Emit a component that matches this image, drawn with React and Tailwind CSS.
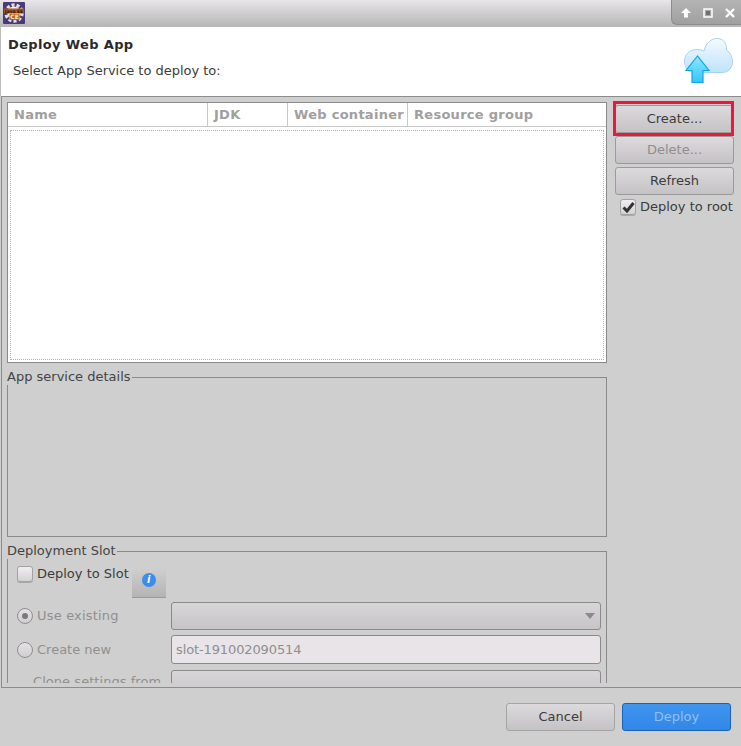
const font = { fontFamily: '"DejaVu Sans", sans-serif' };

// small tool button with the GTK style gradient
function SideButton({ label, disabled = false }) {
  return (
    <button
      className={`h-[28px] w-[119px] rounded-[3px] border border-[#9a9a9a] bg-gradient-to-b from-[#dcdadc] to-[#c4c2c4] text-[13px] ${
        disabled ? "text-[#8f8f8f]" : "text-[#3c3c3c]"
      }`}
    >
      {label}
    </button>
  );
}

function AppIcon() {
  return (
    <svg width="22" height="22" viewBox="0 0 22 22" className="ml-[3px]">
      <rect width="22" height="22" rx="1" fill="#4a3a78" />
      <circle cx="11" cy="11" r="8" fill="none" stroke="#e0e0e0" strokeWidth="3.500" strokeDasharray="3 2" />
      <circle cx="11" cy="11" r="6.500" fill="#f2efe6" />
      <rect x="1" y="6.500" width="20" height="5" fill="#a8591c" />
      <rect x="6.500" y="12" width="10" height="6" fill="#b5651d" />
      <text x="11" y="10.500" fontSize="4.500" textAnchor="middle" fontWeight="700" fill="#2a1a08">
        Java EE
      </text>
      <text x="11.500" y="17" fontSize="6" textAnchor="middle" fontWeight="700" fill="#f4e6d0">
        CE
      </text>
    </svg>
  );
}

function WindowControls() {
  return (
    <div className="flex h-[25px] w-[70px] items-center gap-[10px] self-start rounded-bl-[6px] border-b border-l border-[#8c8c8c] bg-gradient-to-b from-[#b4b4b4] to-[#a0a0a0] pl-[8px]">
      <svg width="12" height="12" viewBox="0 0 12 12" fill="#ffffff" className="mt-px">
        <path d="M6 1 11 6H8V10.500H4V6H1Z" />
      </svg>
      <svg width="12" height="12" viewBox="0 0 12 12" fill="none" stroke="#ffffff" className="mt-px">
        <rect x="2" y="2" width="8" height="8" strokeWidth="1.500" />
        <rect x="4" y="4" width="4" height="4" fill="#6f6f6f" stroke="none" />
      </svg>
      <svg width="12" height="12" viewBox="0 0 12 12" fill="none" stroke="#ffffff" strokeWidth="2.400" className="mt-px">
        <path d="M2 2 10 10M10 2 2 10" />
      </svg>
    </div>
  );
}

function CloudIcon() {
  return (
    <svg width="49" height="46" viewBox="0 0 49 46">
      <defs>
        <linearGradient id="cloud" x1="0" y1="0" x2="0" y2="1">
          <stop offset="0" stopColor="#f4fafe" />
          <stop offset="1" stopColor="#bfe3fb" />
        </linearGradient>
        <linearGradient id="arrow" x1="0" y1="0" x2="0" y2="1">
          <stop offset="0" stopColor="#8fe8fd" />
          <stop offset="1" stopColor="#35c4fa" />
        </linearGradient>
      </defs>
      <path
        d="M11 34.500C4 34.500 .5 29 .5 23 .5 16 6 11.500 13 11.500 16 11.500 18 12 20 13 22 5 27 .5 33 .5 39 .5 43 5 42.500 12 46 14 48.500 19 48.500 24 48.500 30 44 34.500 38 34.500Z"
        fill="url(#cloud)"
        stroke="#a5d4f2"
        strokeWidth="1"
      />
      <path d="M13.500 18 2 32.500H8V44.500H19V32.500H25Z" fill="url(#arrow)" stroke="#10a4ea" strokeWidth="1.200" />
    </svg>
  );
}

function Check({ checked = false }) {
  return (
    <span className="flex h-[16px] w-[16px] shrink-0 items-center justify-center rounded-[3px] border border-[#a2a2a2] bg-gradient-to-b from-[#f0eef0] to-[#d4d2d4] shadow-[0_1px_0_#a8a8a8]">
      {checked && (
        <svg width="13" height="12" viewBox="0 0 13 12" fill="none" stroke="#333333" strokeWidth="3">
          <path d="M1.500 6.500 5 10 11.500 2" />
        </svg>
      )}
    </span>
  );
}

function Radio({ checked = false }) {
  return (
    <span className="flex h-[16px] w-[16px] shrink-0 items-center justify-center rounded-full border border-[#8f8f8f] bg-gradient-to-b from-[#e4e2e4] to-[#d0ced0]">
      {checked && <span className="h-[6px] w-[6px] rounded-full bg-[#7a7a7a]" />}
    </span>
  );
}

function ComboBox({ arrow = false }) {
  return (
    <div className="flex h-[28px] w-[430px] shrink-0 items-center justify-end rounded-[3px] border border-[#8a8a8a] bg-gradient-to-b from-[#d8d6d8] to-[#c6c4c6] pr-[5px]">
      {arrow && (
        <svg width="10" height="6" viewBox="0 0 10 6" fill="#8a8a8a">
          <path d="M0 0H10L5 6Z" />
        </svg>
      )}
    </div>
  );
}

function HeaderCell({ label, className = "" }) {
  return (
    <div className={`flex h-full items-center border-r border-[#c8c8c8] pl-[6px] text-[13px] font-bold tracking-[0.28px] text-[#a0a0a0] ${className}`}>
      {label}
    </div>
  );
}

export default function App() {
  return (
    <div className="flex h-[746px] w-[741px] flex-col overflow-hidden bg-[#cfcfcf]" style={font}>
      {/* title bar */}
      <div className="flex h-[27px] shrink-0 items-start justify-between bg-gradient-to-b from-[#e8e6e8] to-[#b6b6b6]">
        <div className="pt-[2px]">
          <AppIcon />
        </div>
        <WindowControls />
      </div>

      {/* wizard header */}
      <div className="flex h-[69px] shrink-0 justify-between border-l border-[#bdbdbd] bg-white pl-[7px] pr-[8px]">
        <div>
          <div className="mt-[10px] text-[13px] font-bold leading-[16px] tracking-[0.36px] text-[#2a2a2a]">Deploy Web App</div>
          <div className="ml-[5px] mt-[10px] text-[13px] leading-[16px] tracking-[-0.03px] text-[#3c3c3c]">Select App Service to deploy to:</div>
        </div>
        <div className="mt-[11px]">
          <CloudIcon />
        </div>
      </div>

      {/* main */}
      <div className="ml-px flex h-[592px] shrink-0 gap-[8px] border-y border-l border-y-[#8c8c8c] border-l-[#8c8c8c] bg-[#cfcfcf] pl-[5px] pt-[5px]">
        <div className="w-[600px] shrink-0">
          {/* table */}
          <div className="h-[261px] border border-[#8a8a8a] bg-white">
            <div className="flex h-[24px] border-b border-[#c8c8c8]">
              <HeaderCell label="Name" className="w-[200px]" />
              <HeaderCell label="JDK" className="w-[80px]" />
              <HeaderCell label="Web container" className="w-[120px] whitespace-nowrap" />
              <HeaderCell label="Resource group" className="flex-1 border-r-0" />
            </div>
            <div className="mx-[2px] mt-[3px] h-[230px] border border-dotted border-[#b0b0b0]" />
          </div>

          <fieldset className="mt-[6px] h-[168px] border border-[#8a8a8a]">
            <legend className="-ml-px p-0 pr-px text-[13px] leading-[16px] text-[#444444]">App service details</legend>
          </fieldset>

          {/* deployment slot, cut off at the bottom of the page body */}
          <fieldset className="mt-[6px] h-[140px] overflow-hidden border border-b-0 border-[#8a8a8a] pl-[9px] pr-[5px]">
            <legend className="-ml-[10px] p-0 pr-px text-[13px] leading-[16px] text-[#444444]">Deployment Slot</legend>
            <div className="flex h-[43px] items-start pt-[7px]">
              <Check />
              <span className="ml-[4px] text-[13px] leading-[16px] text-[#3c3c3c]">Deploy to Slot</span>
              <div className="ml-[3px] mt-[2px] flex h-[30px] w-[34px] justify-center border-b border-[#9a9a9a] bg-gradient-to-b from-[#cfcfcf] to-[#b4b4b4] pt-[5px]">
                <span className="flex h-[14px] w-[14px] items-center justify-center rounded-full bg-[#3b8cec] text-[10px] font-bold italic leading-none text-white">
                  i
                </span>
              </div>
            </div>
            <div className="flex h-[28px] items-center justify-between">
              <div className="flex items-center gap-[4px]">
                <Radio checked />
                <span className="text-[13px] tracking-[0.18px] text-[#8f8f8f]">Use existing</span>
              </div>
              <ComboBox arrow />
            </div>
            <div className="mt-[5px] flex h-[29px] items-center justify-between">
              <div className="flex items-center gap-[4px]">
                <Radio />
                <span className="text-[13px] text-[#8f8f8f]">Create new</span>
              </div>
              <div className="flex h-[29px] w-[430px] items-center rounded-[3px] border border-[#8a8a8a] bg-[#e8e4e8] pl-[4px] text-[13px] tracking-[-0.12px] text-[#8f8f8f]">
                slot-191002090514
              </div>
            </div>
            <div className="mt-[6px] flex h-[28px] items-start justify-between">
              <span className="ml-[16px] mt-[4px] text-[13px] leading-[16px] tracking-[0.05px] text-[#8f8f8f]">Clone settings from</span>
              <ComboBox />
            </div>
          </fieldset>
        </div>

        {/* right column */}
        <div className="flex w-[119px] shrink-0 flex-col pt-[3px]">
          <div className="relative">
            <SideButton label="Create..." />
            <div className="pointer-events-none absolute left-[-2px] right-0 top-[-4px] h-[35px] border-[3px] border-[#e8193c]" />
          </div>
          <div className="mt-[3px]">
            <SideButton label="Delete..." disabled />
          </div>
          <div className="mt-[3px]">
            <SideButton label="Refresh" />
          </div>
          <div className="ml-[5px] mt-[3px] flex items-center gap-[4px]">
            <Check checked />
            <span className="whitespace-nowrap pt-px text-[13px] leading-[16px] text-[#3c3c3c]">Deploy to root</span>
          </div>
        </div>
      </div>

      {/* footer */}
      <div className="flex flex-1 items-start justify-end gap-[7px] pr-[10px] pt-[15px]">
        <button className="h-[28px] w-[109px] rounded-[3px] border border-[#a4a4a4] bg-gradient-to-b from-[#dcdadc] to-[#c4c2c4] text-[13px] text-[#3c3c3c]">
          Cancel
        </button>
        <button className="h-[28px] w-[109px] rounded-[3px] border border-[#1a62b4] bg-gradient-to-b from-[#4095ee] to-[#3286e8] text-[13px] text-[#8fc0f4]">
          Deploy
        </button>
      </div>
    </div>
  );
}
